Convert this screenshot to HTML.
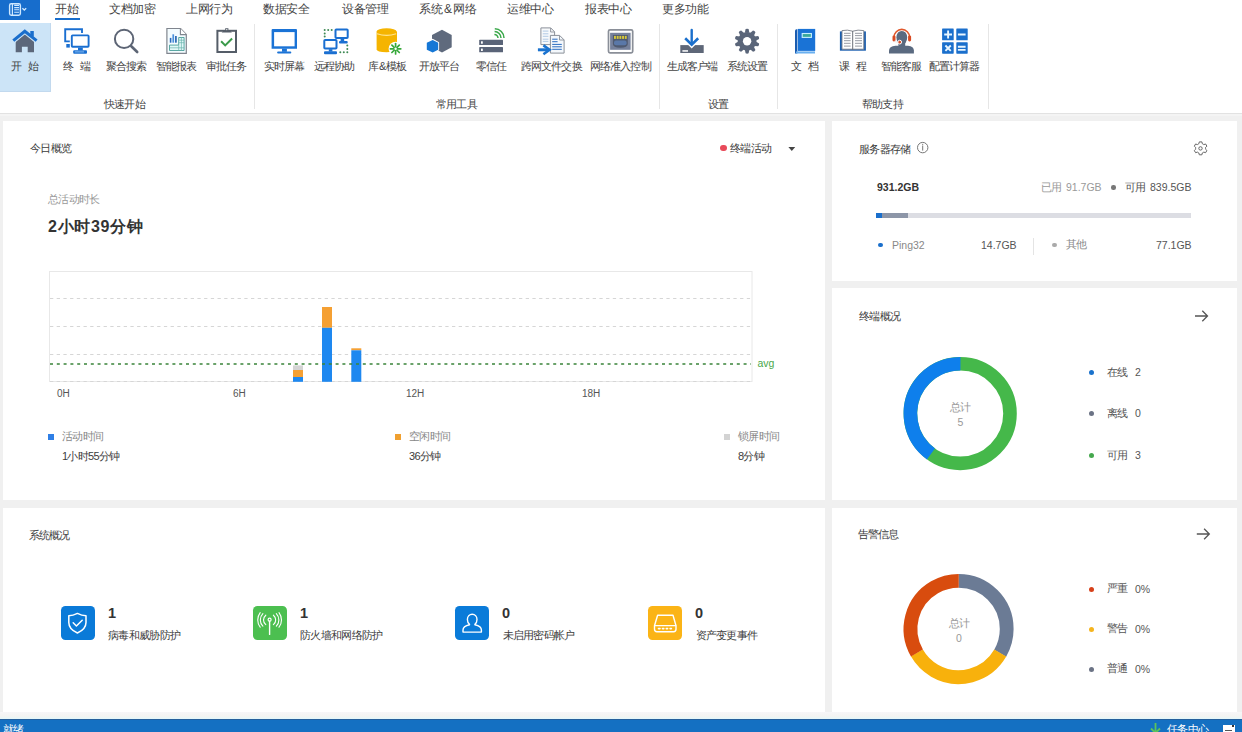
<!DOCTYPE html>
<html><head><meta charset="utf-8">
<style>
*{box-sizing:border-box}
html,body{margin:0;padding:0}
body{width:1242px;height:732px;overflow:hidden;position:relative;background:#f0f0f0;font-family:"Liberation Sans",sans-serif;color:#333}
.a{position:absolute;white-space:nowrap;line-height:1}
#tabs{position:absolute;left:0;top:0;width:1242px;height:20px;background:#fff}
#appbtn{position:absolute;left:0;top:0;width:40px;height:20.5px;background:#176dcc}
.tab{position:absolute;top:3px;font-size:12px;letter-spacing:-0.3px;color:#444;line-height:1;white-space:nowrap}
#ribbon{position:absolute;left:0;top:20px;width:1242px;height:94px;background:#fff;border-bottom:1px solid #e2e2e2}
#ribbon:after{content:"";position:absolute;left:0;top:94px;width:1242px;height:2px;background:#f4f4f4}
.rl{position:absolute;top:41px;font-size:11px;letter-spacing:-0.9px;color:#444;line-height:1;white-space:nowrap}
.gl{position:absolute;top:79px;font-size:11px;letter-spacing:-0.8px;color:#444;line-height:1;white-space:nowrap}
.sep{position:absolute;top:4px;width:1px;height:85px;background:#e6e6e6}
.ic{position:absolute}
.panel{position:absolute;background:#fff}
.tk{font-size:10px;color:#555}
.sq{position:absolute;top:606.2px;width:34px;height:34px;border-radius:4.5px}
.num{font-size:14.5px;font-weight:bold;color:#333}
.pt{position:absolute;margin-top:0px;font-size:11px;letter-spacing:-0.7px;color:#3c3c3c;line-height:1;white-space:nowrap}
</style></head><body>
<div id="tabs">
  <div id="appbtn"></div>
  <div class="tab" style="left:55px">开始</div>
  <div style="position:absolute;left:55px;top:18px;width:24.5px;height:2.5px;background:#176dcc"></div>
  <div class="tab" style="left:109px">文档加密</div>
  <div class="tab" style="left:186px">上网行为</div>
  <div class="tab" style="left:263px">数据安全</div>
  <div class="tab" style="left:342px">设备管理</div>
  <div class="tab" style="left:419px">系统<span style="margin:0 1.5px">&amp;</span>网络</div>
  <div class="tab" style="left:507px">运维中心</div>
  <div class="tab" style="left:585px">报表中心</div>
  <div class="tab" style="left:662px">更多功能</div>
</div>
<div id="ribbon">
  <div style="position:absolute;left:0;top:3px;width:51px;height:69px;background:#cce4f7;border-right:1px solid #c2d9ee;border-bottom:1px solid #c2d9ee"></div>
  <div class="rl" style="left:11px">开<span style="margin-left:6.6px">始</span></div>
  <div class="rl" style="left:63px">终<span style="margin-left:6.6px">端</span></div>
  <div class="rl" style="left:106px">聚合搜索</div>
  <div class="rl" style="left:156px">智能报表</div>
  <div class="rl" style="left:206px">审批任务</div>
  <div class="rl" style="left:264px">实时屏幕</div>
  <div class="rl" style="left:314px">远程协助</div>
  <div class="rl" style="left:368px">库<span style="margin:0 0.8px">&amp;</span>模板</div>
  <div class="rl" style="left:419px">开放平台</div>
  <div class="rl" style="left:476px">零信任</div>
  <div class="rl" style="left:521px">跨网文件交换</div>
  <div class="rl" style="left:590px">网络准入控制</div>
  <div class="rl" style="left:667px">生成客户端</div>
  <div class="rl" style="left:727px">系统设置</div>
  <div class="rl" style="left:791px">文<span style="margin-left:6.6px">档</span></div>
  <div class="rl" style="left:839px">课<span style="margin-left:6.6px">程</span></div>
  <div class="rl" style="left:881px">智能客服</div>
  <div class="rl" style="left:929px">配置计算器</div>
  <div class="gl" style="left:104px">快速开始</div>
  <div class="gl" style="left:436px">常用工具</div>
  <div class="gl" style="left:708px">设置</div>
  <div class="gl" style="left:862px">帮助支持</div>
  <div class="sep" style="left:254px"></div>
  <div class="sep" style="left:659px"></div>
  <div class="sep" style="left:777px"></div>
  <div class="sep" style="left:988px"></div>
</div>
<svg id="icons" style="position:absolute;left:0;top:0" width="1242" height="113" viewBox="0 0 1242 113">
<!-- app button icon -->
<rect x="9.6" y="3.8" width="10.8" height="11.4" rx="1.6" fill="none" stroke="#cfe8ff" stroke-width="1.4"/>
<line x1="12.4" y1="4" x2="12.4" y2="15" stroke="#cfe8ff" stroke-width="1.2"/>
<path d="M14.2 5.4H19M14.2 7.6H19M14.2 9.8H19M14.2 12.2H19" stroke="#cfe8ff" stroke-width="1.1"/>
<path d="M22.4 8.2L24.3 10L26.2 8.2" fill="none" stroke="#cfe8ff" stroke-width="1.3"/>
<!-- home -->
<path d="M15.7 52.3V41.2L25 33.6L34 41.2V52.3H27.7V46.8H21.9V52.3Z" fill="#5c677a"/>
<path d="M13.3 40.8L24.8 31.4L36.6 40.8" fill="none" stroke="#cce4f7" stroke-width="5"/><path d="M13.3 40.6L24.8 31.2L36.6 40.6" fill="none" stroke="#1a6ecc" stroke-width="3.1" stroke-linecap="butt"/>
<rect x="30.3" y="31" width="3.5" height="5.5" fill="#1a6ecc"/>
<!-- terminal -->
<path d="M69.8 41.4H65.2V29.3H82V33" fill="none" stroke="#1a6fd1" stroke-width="1.9"/>
<rect x="66.3" y="44" width="3.5" height="3.6" fill="#1a6fd1"/>
<rect x="71.8" y="35.4" width="16.8" height="11.4" rx="0.8" fill="#fff" stroke="#1a6fd1" stroke-width="1.9"/>
<rect x="78" y="47.6" width="4.8" height="2.8" fill="#1a6fd1"/>
<rect x="73.2" y="50.2" width="13.8" height="3.5" rx="1" fill="#1a6fd1"/>
<line x1="74.8" y1="51.9" x2="84" y2="51.9" stroke="#8fc3f5" stroke-width="0.9"/>
<!-- search -->
<circle cx="124.1" cy="38.9" r="9.2" fill="none" stroke="#5d6575" stroke-width="2"/>
<line x1="131.3" y1="46.2" x2="137.2" y2="52" stroke="#5d6575" stroke-width="2.6" stroke-linecap="round"/>
<!-- report -->
<path d="M166.9 28.5H180.6L186.3 34.4V53.4H166.9Z" fill="#f4fcff" stroke="#80858e" stroke-width="1.2"/>
<path d="M180.4 28.6V34.6H186.2" fill="#fff" stroke="#80858e" stroke-width="1.1"/>
<rect x="169.8" y="37.9" width="1.6" height="4.8" fill="#2a6cc0"/>
<rect x="172.4" y="34.3" width="1.7" height="8.4" fill="#4a90dc"/>
<rect x="175.1" y="36" width="1.6" height="6.7" fill="#1d5fae"/>
<path d="M178.7 37.5H184.1V50.5H169.5V45.1H178.7Z" fill="#e2f8f8" stroke="#4a9e98" stroke-width="0.9"/>
<path d="M178.7 40.2H184.1M178.7 42.7H184.1M169.5 47.8H184.1M181.4 37.5V50.5M178.7 45.1V50.5" stroke="#6ab4ae" stroke-width="0.7"/>
<!-- clipboard -->
<rect x="217.4" y="30.8" width="18.6" height="21.2" fill="#fff" stroke="#555d68" stroke-width="2"/>
<path d="M221.6 32.6L224.3 30H225.2V28.2H228.4V30H229.3L231.9 32.6Z" fill="#555d68"/>
<circle cx="226.8" cy="29.6" r="0.7" fill="#fff"/>
<path d="M221.1 41.3L225.2 45.4L232.1 38.5" fill="none" stroke="#3a9a4a" stroke-width="2"/>
<!-- realtime monitor -->
<path d="M271.6 30.1a1 1 0 0 1 1-1H296a1 1 0 0 1 1 1V48.8H271.6Z" fill="#1a73d6"/>
<rect x="274.1" y="32.1" width="20.5" height="14.2" fill="#fff"/>
<rect x="282" y="48.6" width="4.9" height="3.2" fill="#1a73d6"/>
<rect x="277.1" y="51.4" width="14.2" height="2.1" rx="1" fill="#1a73d6"/>
<!-- remote assist -->
<rect x="335.5" y="29.4" width="12.2" height="8.6" rx="0.8" fill="#fff" stroke="#1a6fd1" stroke-width="2"/>
<rect x="340.6" y="38.8" width="3.6" height="2.4" fill="#1a6fd1"/>
<rect x="339" y="41" width="8.7" height="2.4" rx="1" fill="#1a6fd1"/>
<rect x="324.3" y="39.9" width="12.2" height="8.6" rx="0.8" fill="#fff" stroke="#1a6fd1" stroke-width="2"/>
<rect x="328.8" y="49.2" width="3.6" height="2.4" fill="#1a6fd1"/>
<rect x="324" y="51.3" width="13" height="2.9" rx="1" fill="#1a6fd1"/>
<g fill="#3f8a55"><circle cx="324.7" cy="30" r="1"/><circle cx="328.2" cy="30" r="1"/><circle cx="331.7" cy="30" r="1"/><circle cx="324.7" cy="33.5" r="1"/><circle cx="324.7" cy="36.6" r="1"/>
<circle cx="340.3" cy="52.3" r="1"/><circle cx="343.8" cy="52.3" r="1"/><circle cx="347.3" cy="52.3" r="1"/><circle cx="347.3" cy="45.4" r="1"/><circle cx="347.3" cy="49" r="1"/></g>
<!-- database -->
<path d="M376.6 31.6V49.3Q376.6 52.2 386.6 52.2Q389.6 52.2 391.5 51.8L397 44.2V31.6Z" fill="#f5b400"/>
<ellipse cx="386.6" cy="31.4" rx="10" ry="3.2" fill="#f5b400"/>
<path d="M377 33.8Q386.6 37 396.2 33.8" fill="none" stroke="#ffe590" stroke-width="1.1"/>
<circle cx="395.6" cy="48.8" r="7" fill="#fff"/>
<g stroke="#36a83a" stroke-width="1.7" stroke-linecap="round"><line x1="395.6" y1="43.6" x2="395.6" y2="54"/><line x1="390.4" y1="48.8" x2="400.8" y2="48.8"/><line x1="391.9" y1="45.1" x2="399.3" y2="52.5"/><line x1="399.3" y1="45.1" x2="391.9" y2="52.5"/></g>
<circle cx="395.6" cy="48.8" r="1.2" fill="#fff"/>
<!-- cubes -->
<path d="M442 29.8L451.7 35.1V47.2L442 52.6L432 47.2V35.1Z" fill="#5f6a7d"/>
<path d="M432.7 38.8L439.1 42.2V50.3L432.7 53.6L425.8 50.3V42.2Z" fill="#fff"/>
<path d="M432.7 39.9L438.2 42.8V49.7L432.7 52.6L426.8 49.7V42.8Z" fill="#1577d6"/>
<!-- server -->
<rect x="479.2" y="39.7" width="23.8" height="5.4" rx="0.6" fill="#5a6478"/>
<rect x="479.2" y="47.1" width="23.8" height="5.2" rx="0.6" fill="#5a6478"/>
<rect x="481" y="41.3" width="1.8" height="2.4" fill="#fff"/>
<rect x="481" y="48.6" width="1.8" height="2.4" fill="#fff"/>
<g fill="none" stroke="#3aa84a" stroke-width="1.5"><path d="M494.4 34.4A3.6 3.6 0 0 1 498 38"/><path d="M494.6 31.6A6.4 6.4 0 0 1 501 38"/><path d="M494.8 28.8A9.2 9.2 0 0 1 504 38"/></g>
<!-- file exchange -->
<path d="M540.9 27.9H550.7L554.6 31.8V44.6H540.9Z" fill="#f7f9fb" stroke="#8a9099" stroke-width="1"/>
<path d="M550.6 28V32H554.5" fill="none" stroke="#8a9099" stroke-width="0.9"/>
<path d="M542.8 31.1H548.4M542.8 33.8H548.4M542.8 36.3H548.4M542.8 39.2H548.4M542.8 41.4H548.4" stroke="#a9c4e2" stroke-width="0.9"/>
<path d="M550.4 35.4H559.6L564.1 39.9V53.1H550.4Z" fill="#f4f8fc" stroke="#8a9099" stroke-width="1"/>
<path d="M559.5 35.5V40H564" fill="none" stroke="#8a9099" stroke-width="0.9"/>
<path d="M552.2 39.2H557.6M552.2 41.7H557.6M552.2 44.4H561.8M552.2 46.8H561.8M552.2 49.3H561.8" stroke="#2a6cc0" stroke-width="1"/>
<path d="M537.9 49.8H548" stroke="#1a73d0" stroke-width="3"/>
<path d="M543.4 45.4L549.6 49.8L543.4 54.2" fill="none" stroke="#1a73d0" stroke-width="2.6"/>
<!-- network port -->
<rect x="608.5" y="29.8" width="24.2" height="23" rx="1.5" fill="#fff" stroke="#8a8f98" stroke-width="1.7"/>
<rect x="610.1" y="32.8" width="20.5" height="17" fill="#76819b"/>
<path d="M612.9 35.1H627.8V44Q627.8 47.7 620.3 47.7Q612.9 47.7 612.9 44Z" fill="#4f5a70"/>
<rect x="614" y="40.4" width="12.6" height="4.8" rx="2" fill="#5a78a8"/>
<g fill="#d8c83a"><rect x="614" y="35.9" width="1.9" height="3"/><rect x="616.7" y="35.9" width="1.9" height="3"/><rect x="619.4" y="35.9" width="1.9" height="3"/><rect x="622.1" y="35.9" width="1.9" height="3"/><rect x="624.8" y="35.9" width="1.9" height="3"/></g>
<!-- download -->
<rect x="680.3" y="45.1" width="23.4" height="7.9" fill="#5e6778"/>
<rect x="682.4" y="50.2" width="5.6" height="1.5" fill="#fff"/>
<path d="M684.6 37.8L691.7 44.9L698.8 37.8" fill="none" stroke="#fff" stroke-width="5"/>
<path d="M685.2 38.2L691.7 44.6L698.2 38.2" fill="none" stroke="#1a6fcc" stroke-width="2.6"/>
<line x1="691.7" y1="30" x2="691.7" y2="44" stroke="#1a6fcc" stroke-width="2.4" stroke-linecap="round"/>
<!-- gear -->
<g transform="translate(747.1 41.2)" fill="#5a6579">
<circle r="9.3"/>
<g id="tooth"><path d="M-2.3 -8.4L-1.5 -12.1Q0 -12.9 1.5 -12.1L2.3 -8.4Z"/></g>
<use href="#tooth" transform="rotate(36)"/><use href="#tooth" transform="rotate(72)"/><use href="#tooth" transform="rotate(108)"/><use href="#tooth" transform="rotate(144)"/><use href="#tooth" transform="rotate(180)"/><use href="#tooth" transform="rotate(216)"/><use href="#tooth" transform="rotate(252)"/><use href="#tooth" transform="rotate(288)"/><use href="#tooth" transform="rotate(324)"/>
<circle r="4.2" fill="#fff"/>
</g>
<!-- book -->
<path d="M797.3 29.3H796.5Q795 29.3 795 31V53.5H797.3Z" fill="#1a5cb0"/>
<rect x="797.8" y="28.9" width="17.4" height="22" fill="#1a73d6"/>
<rect x="795.9" y="51.4" width="19.1" height="2.1" fill="#6ab0f0"/>
<rect x="802.2" y="33.5" width="9.2" height="3.9" fill="#3aa89a" stroke="#c8f0ff" stroke-width="1.1"/>
<!-- open book -->
<rect x="839.9" y="31.4" width="26" height="19.3" fill="#1a5fb0"/>
<path d="M842 30.6Q847.5 29.4 852.6 31.2Q858 29.4 863.8 30.6V49.2H842Z" fill="#fff" stroke="#7a7f88" stroke-width="0.9"/>
<line x1="852.7" y1="31" x2="852.7" y2="50" stroke="#6a6f78" stroke-width="1"/>
<path d="M844 33.3H850.6M844 35.6H850.6M844 38.2H850.6M844 40.7H850.6M844 43.3H850.6M844 46.1H850.6M855 33.3H862M855 35.6H862M855 38.2H862M855 40.7H862M855 43.3H862M855 46.1H862" stroke="#8a8f98" stroke-width="0.9"/>
<!-- headset -->
<ellipse cx="901.8" cy="37.6" rx="5.4" ry="7.2" fill="#5a6a80"/>
<rect x="898.4" y="41" width="6.8" height="5.5" fill="#5a6a80"/>
<path d="M889 53.6V50.6Q889 46.2 895.5 45.7H908Q913.9 46.2 913.9 50.6V53.6Z" fill="#5a6a80"/>
<path d="M894 40.4V37.2A7.8 7.8 0 0 1 909.6 37.2V40.4" fill="none" stroke="#fff" stroke-width="3"/>
<path d="M894 40.4V37.2A7.8 7.8 0 0 1 909.6 37.2V40.4" fill="none" stroke="#e0582c" stroke-width="1.6"/>
<rect x="892.5" y="35.4" width="3" height="6" rx="1.3" fill="#d94a22"/>
<rect x="908.1" y="35.4" width="3" height="6" rx="1.3" fill="#d94a22"/>
<path d="M894.5 41.2Q896 42.3 898 42.2" fill="none" stroke="#e8e8e8" stroke-width="0.9"/>
<circle cx="899.7" cy="42.1" r="1.9" fill="#d94a22" stroke="#fff" stroke-width="1"/>
<!-- calculator -->
<g fill="#1a6fcc"><rect x="942.1" y="28.4" width="11.6" height="11.9" rx="0.6"/><rect x="956.3" y="28.4" width="11.4" height="11.9" rx="0.6"/><rect x="942.1" y="42.3" width="11.6" height="11.4" rx="0.6"/><rect x="956.3" y="42.3" width="11.4" height="11.4" rx="0.6"/></g>
<g stroke="#e8f6ff" stroke-width="1.9"><path d="M944.2 34.5H952M948.1 30.6V38.4M957.9 34.5H965.6M957.9 46.8H965.6M957.9 49.9H965.6"/><path d="M945.4 45.5L950.8 50.9M950.8 45.5L945.4 50.9"/></g>
</svg>

<!-- panels -->
<div class="panel" style="left:3px;top:121px;width:822px;height:379px"></div>
<div class="panel" style="left:832px;top:121px;width:405px;height:160px"></div>
<div class="panel" style="left:832px;top:288px;width:405px;height:212px"></div>
<div class="panel" style="left:3px;top:508px;width:822px;height:204px"></div>
<div class="panel" style="left:832px;top:508px;width:405px;height:204px"></div>

<!-- today overview -->
<div class="pt" style="left:30px;top:143px">今日概览</div>
<div style="position:absolute;left:720.3px;top:144.7px;width:6.3px;height:6.3px;border-radius:50%;background:#e84a5a"></div>
<div class="pt" style="left:730px;top:143px">终端活动</div>
<svg style="position:absolute;left:788px;top:146px" width="8" height="6"><path d="M0.4 1H7.2L3.8 5Z" fill="#444"/></svg>
<div class="pt" style="left:48px;top:194px;color:#999">总活动时长</div>
<div class="a" style="left:48px;top:219px;font-size:16px;letter-spacing:0.7px;font-weight:bold;color:#333">2小时39分钟</div>
<svg style="position:absolute;left:0;top:260px" width="800" height="150" viewBox="0 260 800 150">
<rect x="49.5" y="271.5" width="702.5" height="110" fill="none" stroke="#e8e8e8" stroke-width="1"/>
<g stroke="#d6d6d6" stroke-width="1" stroke-dasharray="3.3 3.4"><line x1="50" y1="298.5" x2="751" y2="298.5"/><line x1="50" y1="326.5" x2="751" y2="326.5"/><line x1="50" y1="354.5" x2="751" y2="354.5"/><line x1="50" y1="381.5" x2="751" y2="381.5"/></g>

<rect x="293" y="365.4" width="10" height="4.6" fill="#d4d4d4"/>
<rect x="293" y="370" width="10" height="7" fill="#f5a033"/>
<rect x="293" y="377" width="10" height="4.8" fill="#1e88f0"/>
<rect x="322" y="307" width="10" height="20.8" fill="#f5a033"/>
<rect x="322" y="327.8" width="10" height="54" fill="#1e88f0"/>
<rect x="351.3" y="348.3" width="10" height="2" fill="#f5a033"/>
<rect x="351.3" y="350.3" width="10" height="31.5" fill="#1e88f0"/>
<line x1="50" y1="364" x2="751" y2="364" stroke="#3a843a" stroke-width="1.7" stroke-dasharray="3 3.8"/>
</svg>
<div class="a" style="left:757.5px;top:357.5px;font-size:10.5px;color:#4aa84a">avg</div>
<div class="a tk" style="left:57px;top:389px">0H</div>
<div class="a tk" style="left:233px;top:389px">6H</div>
<div class="a tk" style="left:406px;top:389px">12H</div>
<div class="a tk" style="left:582px;top:389px">18H</div>
<div style="position:absolute;left:47.5px;top:434px;width:6px;height:6px;background:#2f7fe6"></div>
<div style="position:absolute;left:394.7px;top:433.7px;width:6px;height:6px;background:#f0a030"></div>
<div style="position:absolute;left:723.7px;top:434px;width:6px;height:6px;background:#d3d3d3"></div>
<div class="pt" style="left:62px;top:431px;color:#888">活动时间</div>
<div class="pt" style="left:409px;top:431px;color:#888">空闲时间</div>
<div class="pt" style="left:738px;top:431px;color:#888">锁屏时间</div>
<div class="pt" style="left:62px;top:451px">1小时55分钟</div>
<div class="pt" style="left:409px;top:451px">36分钟</div>
<div class="pt" style="left:738px;top:451px">8分钟</div>

<!-- storage -->
<div class="pt" style="left:859px;top:144px">服务器存储</div>
<svg style="position:absolute;left:915px;top:140px" width="16" height="16" viewBox="915 140 16 16"><circle cx="922.7" cy="147.6" r="5.2" fill="none" stroke="#777" stroke-width="1"/><line x1="922.7" y1="145.5" x2="922.7" y2="150.6" stroke="#777" stroke-width="1"/><circle cx="922.7" cy="144.3" r="0.6" fill="#777"/></svg>
<svg style="position:absolute;left:1190px;top:138px" width="22" height="22" viewBox="1190 138 22 22">
<path d="M1199.3 141.9h2.6l.4 1.8a5.2 5.2 0 0 1 1.5.9l1.8-.6 1.3 2.2-1.4 1.3a5.2 5.2 0 0 1 0 1.7l1.4 1.3-1.3 2.2-1.8-.6a5.2 5.2 0 0 1-1.5.9l-.4 1.8h-2.6l-.4-1.8a5.2 5.2 0 0 1-1.5-.9l-1.8.6-1.3-2.2 1.4-1.3a5.2 5.2 0 0 1 0-1.7l-1.4-1.3 1.3-2.2 1.8.6a5.2 5.2 0 0 1 1.5-.9z" fill="none" stroke="#666" stroke-width="1"/>
<circle cx="1200.5" cy="148.4" r="1.7" fill="none" stroke="#666" stroke-width="1"/></svg>
<div class="a" style="left:877px;top:182px;font-size:10.5px;font-weight:bold;color:#333">931.2GB</div>
<div class="pt" style="left:1041px;top:182px;color:#999">已用</div>
<div class="a" style="left:1066px;top:182px;font-size:10.5px;color:#999">91.7GB</div>
<div style="position:absolute;left:1111.4px;top:185.3px;width:4.5px;height:4.5px;border-radius:50%;background:#777"></div>
<div class="pt" style="left:1125px;top:182px;color:#555">可用</div>
<div class="a" style="left:1150px;top:182px;font-size:10.5px;color:#555">839.5GB</div>
<div style="position:absolute;left:876px;top:212.5px;width:315px;height:5px;background:#dcdde3"></div>
<div style="position:absolute;left:882px;top:212.5px;width:26px;height:5px;background:#8d96a8"></div>
<div style="position:absolute;left:876px;top:212.5px;width:6px;height:5px;background:#1a6fcc"></div>
<div style="position:absolute;left:878.3px;top:242.7px;width:4.6px;height:4.6px;border-radius:50%;background:#1a6fcc"></div>
<div class="a" style="left:892px;top:239.5px;font-size:10.5px;color:#888">Ping32</div>
<div class="a" style="left:981px;top:240px;font-size:10.5px;color:#555">14.7GB</div>
<div style="position:absolute;left:1033px;top:237.5px;width:1px;height:17px;background:#e4e4e4"></div>
<div style="position:absolute;left:1052.4px;top:242.7px;width:4.6px;height:4.6px;border-radius:50%;background:#aaa"></div>
<div class="pt" style="left:1066px;top:239px;color:#888">其他</div>
<div class="a" style="left:1156px;top:240px;font-size:10.5px;color:#555">77.1GB</div>

<!-- terminal overview -->
<div class="pt" style="left:859px;top:311px">终端概况</div>
<svg style="position:absolute;left:1190px;top:305px" width="22" height="22" viewBox="1190 305 22 22"><path d="M1195 316H1207.5M1202.3 310.8L1207.5 316L1202.3 321.2" fill="none" stroke="#555" stroke-width="1.3"/></svg>
<svg style="position:absolute;left:895px;top:350px" width="130" height="130" viewBox="895 350 130 130">
<circle cx="960.2" cy="413.6" r="49.8" fill="none" stroke="#45b84a" stroke-width="13.6"/>
<circle cx="960.2" cy="413.6" r="49.8" fill="none" stroke="#0e7fec" stroke-width="13.6" stroke-dasharray="125.2 400" transform="rotate(126 960.2 413.6)"/>
</svg>
<div class="pt" style="left:950px;top:402px;color:#999">总计</div>
<div class="a" style="left:957.5px;top:417px;font-size:10.5px;color:#999">5</div>
<div style="position:absolute;left:1088.5px;top:370px;width:5px;height:5px;border-radius:50%;background:#1a72cc"></div>
<div style="position:absolute;left:1088.5px;top:411px;width:5px;height:5px;border-radius:50%;background:#6b7385"></div>
<div style="position:absolute;left:1088.5px;top:453.2px;width:5px;height:5px;border-radius:50%;background:#45a84e"></div>
<div class="pt" style="left:1107px;top:367px;color:#555">在线</div><div class="a" style="left:1135px;top:367px;font-size:10.5px;color:#555">2</div>
<div class="pt" style="left:1107px;top:408px;color:#555">离线</div><div class="a" style="left:1135px;top:408px;font-size:10.5px;color:#555">0</div>
<div class="pt" style="left:1107px;top:450px;color:#555">可用</div><div class="a" style="left:1135px;top:450px;font-size:10.5px;color:#555">3</div>

<!-- system overview -->
<div class="pt" style="left:28.5px;top:530px">系统概况</div>
<div class="sq" style="left:61px;background:#0a7ad8"></div>
<div class="sq" style="left:253px;background:#4cbf50"></div>
<div class="sq" style="left:455px;background:#0a7bd9"></div>
<div class="sq" style="left:648.3px;background:#fbb416"></div>
<svg style="position:absolute;left:0;top:600px" width="700" height="46" viewBox="0 600 700 46">
<g fill="none" stroke="#fff" stroke-width="1.5" stroke-linejoin="round" stroke-linecap="round">
<path d="M77.4 613.4Q73 615.6 68.8 615.8V622.5Q68.8 629.2 77.4 633Q86 629.2 86 622.5V615.8Q81.8 615.6 77.4 613.4Z"/>
<path d="M73.2 622.8L76.4 626L82.2 620.2"/>
<line x1="269.6" y1="621.2" x2="269.6" y2="634.4" stroke-width="1.4"/><circle cx="269.6" cy="619.7" r="1.5" stroke-width="1.2"/>
<path d="M265.8 615.2a6 6 0 0 0 0 9.4M273.4 615.2a6 6 0 0 1 0 9.4M262.9 613.6a9 9 0 0 0 0 12.6M276.3 613.6a9 9 0 0 1 0 12.6M260.2 612.6a12 12 0 0 0 0 14.6M279 612.6a12 12 0 0 1 0 14.6" stroke-width="1.1"/>
<path d="M472.2 614.3c2.7 0 4.8 2.3 4.8 5.2c0 2.2-.9 3.8-2.1 4.8v.4q6.5 1.6 6.5 5.2v2.2h-18.4v-2.2q0-3.6 6.5-5.2v-.4c-1.2-1-2.1-2.6-2.1-4.8c0-2.9 2.1-5.2 4.8-5.2z" stroke-width="1.4"/>
<path d="M657.6 615.3H673L676 625.8V629.3Q676 631.7 673.6 631.7H656.9Q654.5 631.7 654.5 629.3V625.8Z" stroke-width="1.4"/><line x1="654.8" y1="625.7" x2="675.7" y2="625.7" stroke-width="1.3"/>
<g stroke-width="1.6"><line x1="658.5" y1="628.6" x2="660" y2="628.6"/><line x1="662.5" y1="628.6" x2="663.8" y2="628.6"/><line x1="666.3" y1="628.6" x2="667.6" y2="628.6"/><line x1="670.1" y1="628.6" x2="671.4" y2="628.6"/></g>
</g></svg>
<div class="a num" style="left:108px;top:606px">1</div>
<div class="a num" style="left:300px;top:606px">1</div>
<div class="a num" style="left:502px;top:606px">0</div>
<div class="a num" style="left:695px;top:606px">0</div>
<div class="pt" style="left:108px;top:630px">病毒和威胁防护</div>
<div class="pt" style="left:300px;top:630px">防火墙和网络防护</div>
<div class="pt" style="left:502.5px;top:630px">未启用密码帐户</div>
<div class="pt" style="left:695.5px;top:630px">资产变更事件</div>

<!-- alarm -->
<div class="pt" style="left:857.5px;top:529px">告警信息</div>
<svg style="position:absolute;left:1190px;top:523px" width="24" height="22" viewBox="1190 523 24 22"><path d="M1196.8 534H1209.3M1204.1 528.8L1209.3 534L1204.1 539.2" fill="none" stroke="#555" stroke-width="1.3"/></svg>
<svg style="position:absolute;left:895px;top:565px" width="130" height="130" viewBox="895 565 130 130">
<circle cx="958.6" cy="629" r="48.1" fill="none" stroke="#6b7b95" stroke-width="13.8" stroke-dasharray="100.75 400" transform="rotate(-90 958.6 629)"/>
<circle cx="958.6" cy="629" r="48.1" fill="none" stroke="#f8b10c" stroke-width="13.8" stroke-dasharray="100.75 400" transform="rotate(30 958.6 629)"/>
<circle cx="958.6" cy="629" r="48.1" fill="none" stroke="#d84c0e" stroke-width="13.8" stroke-dasharray="100.75 400" transform="rotate(150 958.6 629)"/>
</svg>
<div class="pt" style="left:949px;top:618px;color:#999">总计</div>
<div class="a" style="left:956px;top:632.5px;font-size:10.5px;color:#999">0</div>
<div style="position:absolute;left:1088.5px;top:586.5px;width:5px;height:5px;border-radius:50%;background:#d6401a"></div>
<div style="position:absolute;left:1088.5px;top:626.6px;width:5px;height:5px;border-radius:50%;background:#f5b41e"></div>
<div style="position:absolute;left:1088.5px;top:666.7px;width:5px;height:5px;border-radius:50%;background:#6b7385"></div>
<div class="pt" style="left:1107px;top:583px;color:#555">严重</div><div class="a" style="left:1135px;top:584px;font-size:10.5px;color:#555">0%</div>
<div class="pt" style="left:1107px;top:623px;color:#555">警告</div><div class="a" style="left:1135px;top:624px;font-size:10.5px;color:#555">0%</div>
<div class="pt" style="left:1107px;top:663px;color:#555">普通</div><div class="a" style="left:1135px;top:664px;font-size:10.5px;color:#555">0%</div>

<div style="position:absolute;left:0;top:712px;width:1242px;height:7px;background:linear-gradient(#f7f6f8,#f3f4f2 60%,#e4f6fa)"></div>
<div style="position:absolute;left:0;top:719px;width:1242px;height:13px;background:#1470c2;border-top:1px solid #245f9c;overflow:hidden">
<div class="a" style="left:3px;top:4px;font-size:11px;letter-spacing:-0.7px;color:#fff">就绪</div>
<svg style="position:absolute;left:1148px;top:2px" width="16" height="12"><path d="M7.5 1V11M3 6.5L7.5 11L12 6.5" fill="none" stroke="#5cc45a" stroke-width="1.8"/></svg>
<div class="a" style="left:1167px;top:4px;font-size:11px;letter-spacing:-0.7px;color:#fff">任务中心</div>
<div style="position:absolute;left:1223px;top:5px;width:12px;height:10px;background:#fff"></div>
<div style="position:absolute;left:1225px;top:10px;width:7px;height:1px;background:#555"></div><div style="position:absolute;left:1225px;top:12px;width:7px;height:1px;background:#555"></div><div style="position:absolute;left:1232px;top:5px;width:2px;height:2px;background:#333"></div>
</div>
</body></html>
